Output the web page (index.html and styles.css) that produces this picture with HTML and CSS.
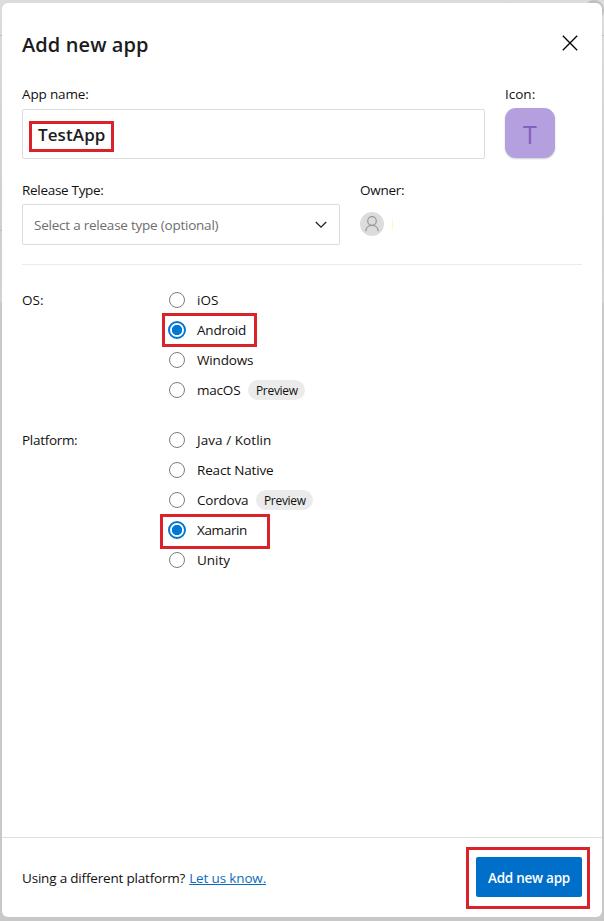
FILE: index.html
```html
<!DOCTYPE html>
<html lang="en">
<head>
<meta charset="utf-8">
<title>Add new app</title>
<link rel="stylesheet" href="styles.css">
</head>
<body>
<div class="backdrop-avatar"></div>
<main class="modal">
  <header class="head">
    <h1 class="title">Add new app</h1>
    <svg class="close" width="18" height="18" viewBox="0 0 18 18"><path d="M1.8 1.8 16.2 16.2M16.2 1.8 1.8 16.2"/></svg>
  </header>
  <section class="row row-name">
    <div class="field name-field">
      <div class="label l-name"><span>App name:</span></div>
      <div class="input"><span class="t-name">TestApp</span><i class="mark mark-name"></i></div>
    </div>
    <div class="field">
      <div class="label l-icon"><span>Icon:</span></div>
      <div class="app-icon">T</div>
    </div>
  </section>
  <section class="row row-release">
    <div class="field release-field">
      <div class="label l-release"><span>Release Type:</span></div>
      <div class="select"><span class="t-select">Select a release type (optional)</span>
        <svg width="12" height="8" viewBox="0 0 12 8"><path d="M.8 1 6 6.2 11.2 1"/></svg>
      </div>
    </div>
    <div class="field">
      <div class="label l-owner"><span>Owner:</span></div>
      <div class="owner">
        <svg width="24" height="24" viewBox="0 0 24 24"><circle class="disc" cx="12" cy="12" r="12"/><circle class="line" cx="12" cy="9" r="4.3"/><path class="line" d="M5.8 19.2c.2-3.6 2.8-5.9 6.2-5.9s6 2.3 6.2 5.9"/></svg>
        <i class="sliver"></i>
      </div>
    </div>
  </section>
  <section class="options">
    <div class="label"><span>OS:</span></div>
    <div class="list">
      <div class="option"><i class="radio"></i><span class="o-ios">iOS</span></div>
      <div class="option"><i class="radio on"></i><span class="o-android">Android</span><i class="mark mark-android"></i></div>
      <div class="option"><i class="radio"></i><span class="o-windows">Windows</span></div>
      <div class="option"><i class="radio"></i><span class="o-mac">macOS</span><b class="badge"><span>Preview</span></b></div>
    </div>
  </section>
  <section class="options platform">
    <div class="label l-platform"><span>Platform:</span></div>
    <div class="list">
      <div class="option"><i class="radio"></i><span class="o-java">Java / Kotlin</span></div>
      <div class="option"><i class="radio"></i><span class="o-react">React Native</span></div>
      <div class="option"><i class="radio"></i><span class="o-cordova">Cordova</span><b class="badge"><span>Preview</span></b></div>
      <div class="option"><i class="radio on"></i><span class="o-xamarin">Xamarin</span><i class="mark mark-xamarin"></i></div>
      <div class="option"><i class="radio"></i><span class="o-unity">Unity</span></div>
    </div>
  </section>
  <footer class="foot">
    <p class="help"><span class="t-help">Using a different platform?</span><a class="t-link">Let us know.</a></p>
    <div class="submit"><span>Add new app</span><i class="mark mark-submit"></i></div>
  </footer>
</main>
</body>
</html>
```
FILE: styles.css
```css
* { box-sizing: border-box; }
body {
  margin: 0;
  height: 921px;
  padding: 3px 2px 4px;
  overflow: hidden;
  position: relative;
  background:
    linear-gradient(#bcbcbc, #bcbcbc) 0 35px / 100% 1px no-repeat,
    linear-gradient(#bcbcbc, #bcbcbc) 0 230px / 2px 1px no-repeat,
    linear-gradient(#dcdcdc 0, #d4d4d4 115px, #cfcfcf 230px, #d2d2d2 302px, #c9c9c9 303px, #c8c8c8 921px);
  font-family: "Open Sans", "Noto Sans", sans-serif;
  font-size: 13.5px;
  color: #111;
}
.backdrop-avatar {
  position: absolute;
  left: 584px;
  top: 0;
  width: 20px;
  height: 20px;
  border-radius: 10px;
  background: #bfbfbf;
}
.modal {
  position: relative;
  display: flex;
  flex-direction: column;
  height: 914px;
  background: #fff;
  border-radius: 6px;
}
.head {
  display: flex;
  justify-content: space-between;
  padding: 28px 23px 0 20px;
  height: 81px;
}
.title {
  margin: 0;
  font-size: 20px;
  line-height: 28px;
  font-weight: 600;
  letter-spacing: 0.1px;
  color: #1b1c1e;
}
.close { margin-top: 3px; stroke: #000; stroke-width: 1.3; }
.row { display: flex; gap: 20px; padding: 0 20px; }
.row-name { height: 96px; }
.row-release { height: 85px; margin: 0 20px; padding: 0; border-bottom: 1px solid #ebebeb; }
.label { line-height: 20px; white-space: nowrap; }
.l-name { letter-spacing: -0.15px; }
.l-release { letter-spacing: -0.3px; }
.l-owner { letter-spacing: -0.25px; }
.l-platform { letter-spacing: -0.3px; }
.name-field { width: 463px; }
.release-field { width: 318px; }
.input {
  position: relative;
  display: flex;
  align-items: center;
  height: 50px;
  margin-top: 5px;
  padding: 0 0 0 15px;
  border: 1px solid #dadcde;
  border-radius: 2px;
  font-size: 17px;
  font-weight: 600;
  letter-spacing: 0.1px;
  color: #1b1c1e;
}
.app-icon {
  width: 50px;
  height: 50px;
  margin-top: 4px;
  border-radius: 11px;
  background: #b4a0de;
  color: #8061be;
  font-size: 25px;
  line-height: 52px;
  text-align: center;
  box-shadow: 0 1px 2px #0003;
}
.select {
  display: flex;
  align-items: center;
  justify-content: space-between;
  height: 41px;
  margin-top: 4px;
  padding: 0 12px 0 11px;
  border: 1px solid #dadcde;
  border-radius: 2px;
  color: #6e6e6e;
  letter-spacing: -0.23px;
  white-space: nowrap;
}
.select svg { fill: none; stroke: #222; stroke-width: 1.3; }
.owner { display: flex; align-items: center; gap: 8px; margin-top: 12px; }
.disc { fill: #dcdcdc; }
.line { fill: none; stroke: #979797; stroke-width: 1.2; }
.sliver { width: 1px; height: 11px; background: #fbfbc8; }
.options { display: flex; padding: 20px 20px 0; line-height: 30px; }
.options > .label { width: 147px; line-height: 30px; }
.option { position: relative; display: flex; align-items: center; height: 30px; white-space: nowrap; }
.o-android, .o-windows, .o-react { letter-spacing: -0.17px; }
.o-mac, .o-cordova { letter-spacing: -0.2px; }
.o-xamarin { letter-spacing: -0.35px; }
.o-java { letter-spacing: 0.06px; }
.radio {
  width: 16px;
  height: 16px;
  margin-right: 12px;
  border: 1px solid #7d7d7d;
  border-radius: 50%;
}
.radio.on {
  width: 18px;
  height: 18px;
  margin: 0 11px 0 -1px;
  border: 2px solid #0078d4;
  background: radial-gradient(circle, #0078d4 4.8px, #fff 5.5px);
}
.badge {
  height: 20px;
  width: 57px;
  margin-left: 8px;
  border-radius: 10px;
  background: #ebebeb;
  font-size: 12px;
  line-height: 22px;
  font-weight: 400;
  letter-spacing: -0.3px;
  text-align: center;
}
.foot {
  display: flex;
  justify-content: space-between;
  align-items: center;
  height: 80px;
  margin-top: auto;
  padding: 0 20px 1px;
  border-top: 1px solid #dfdfdf;
}
.help { display: flex; gap: 4px; margin: 0; padding-top: 2px; white-space: nowrap; }
.t-help { letter-spacing: -0.19px; }
.t-link { letter-spacing: -0.15px; color: #0b6cbd; text-decoration: underline; }
.submit {
  position: relative;
  width: 106px;
  height: 40px;
  border-radius: 2px;
  background: #006fca;
  color: #fff;
  font-weight: 600;
  line-height: 42px;
  letter-spacing: -0.25px;
  text-align: center;
  white-space: nowrap;
}
.mark { position: absolute; border: 3px solid #db2129; }
.mark-name { left: 6px; top: 11px; width: 85px; height: 31px; }
.mark-android { left: -7px; top: -2px; width: 95px; height: 34px; }
.mark-xamarin { left: -9px; top: -1px; width: 110px; height: 35px; }
.mark-submit { left: -10px; top: -10px; width: 124px; height: 62px; }
```
